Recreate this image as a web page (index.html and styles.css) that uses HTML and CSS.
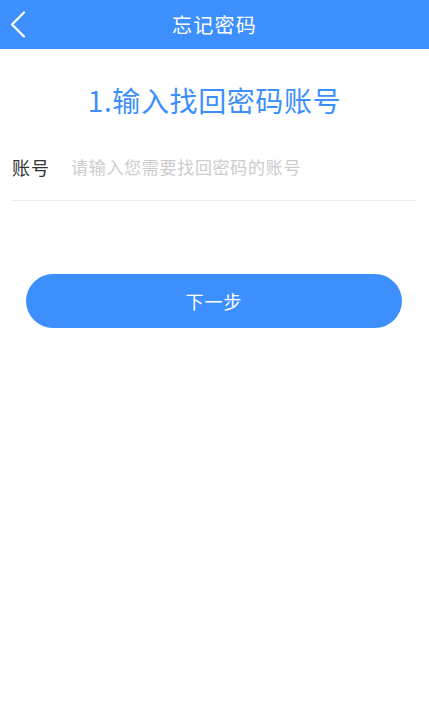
FILE: index.html
```html
<!DOCTYPE html>
<html lang="zh-CN">
<head>
<meta charset="utf-8">
<title>忘记密码</title>
<link rel="stylesheet" href="styles.css">
</head>
<body>
<header class="topbar">
  <button class="back" aria-label="返回">
    <svg width="16" height="28" viewBox="0 0 16 28"><path d="M14 1.5 L2 13.5 L14 25.5" fill="none" stroke="#fff" stroke-width="2.2" stroke-linecap="round" stroke-linejoin="round"/></svg>
  </button>
  <h1 class="title">忘记密码</h1>
  <span class="spacer"></span>
</header>
<main class="content">
  <h2 class="step">1.输入找回密码账号</h2>
  <div class="field">
    <label class="label" for="acc">账号</label>
    <input class="input" id="acc" type="text" placeholder="请输入您需要找回密码的账号">
  </div>
  <button class="next">下一步</button>
</main>
</body>
</html>
```
FILE: styles.css
```css
* { box-sizing: border-box; }
html, body { margin: 0; padding: 0; background: #fff; }
body { font-family: "Noto Sans CJK SC", "Noto Sans", sans-serif; }

.topbar {
  height: 49px;
  background: #3d8ffe;
  display: grid;
  grid-template-columns: 56px 1fr 56px;
  align-items: center;
}
.back {
  background: none;
  border: 0;
  padding: 0 0 0 10px;
  height: 49px;
  display: flex;
  align-items: center;
  cursor: pointer;
}
.title {
  margin: 0;
  text-align: center;
  color: #fff;
  font-size: 20px;
  font-weight: 400;
  letter-spacing: 1.2px;
  line-height: 49px;
}

.content { display: flex; flex-direction: column; }
.step {
  margin: 31px 0 0;
  text-align: center;
  color: #3d8ffe;
  font-size: 28px;
  font-weight: 400;
  letter-spacing: 0.6px;
  line-height: 40px;
}
.field {
  margin: 35px 12px 0;
  padding-bottom: 21px;
  border-bottom: 1px solid #eeeeee;
  display: flex;
  align-items: center;
  gap: 21px;
}
.label {
  font-size: 18px;
  line-height: 24px;
  letter-spacing: 1px;
  color: #333;
  flex: none;
}
.input {
  flex: 1;
  min-width: 0;
  border: 0;
  outline: none;
  padding: 0;
  font-family: inherit;
  font-size: 17px;
  letter-spacing: 0.7px;
  line-height: 24px;
  color: #333;
  background: transparent;
}
.input::placeholder { color: #cccccc; }
.next {
  margin: 73px 27px 0 26px;
  height: 54px;
  border: 0;
  border-radius: 27px;
  background: #3d8ffe;
  color: #fff;
  font-family: inherit;
  font-size: 18px;
  letter-spacing: 1px;
}
```
